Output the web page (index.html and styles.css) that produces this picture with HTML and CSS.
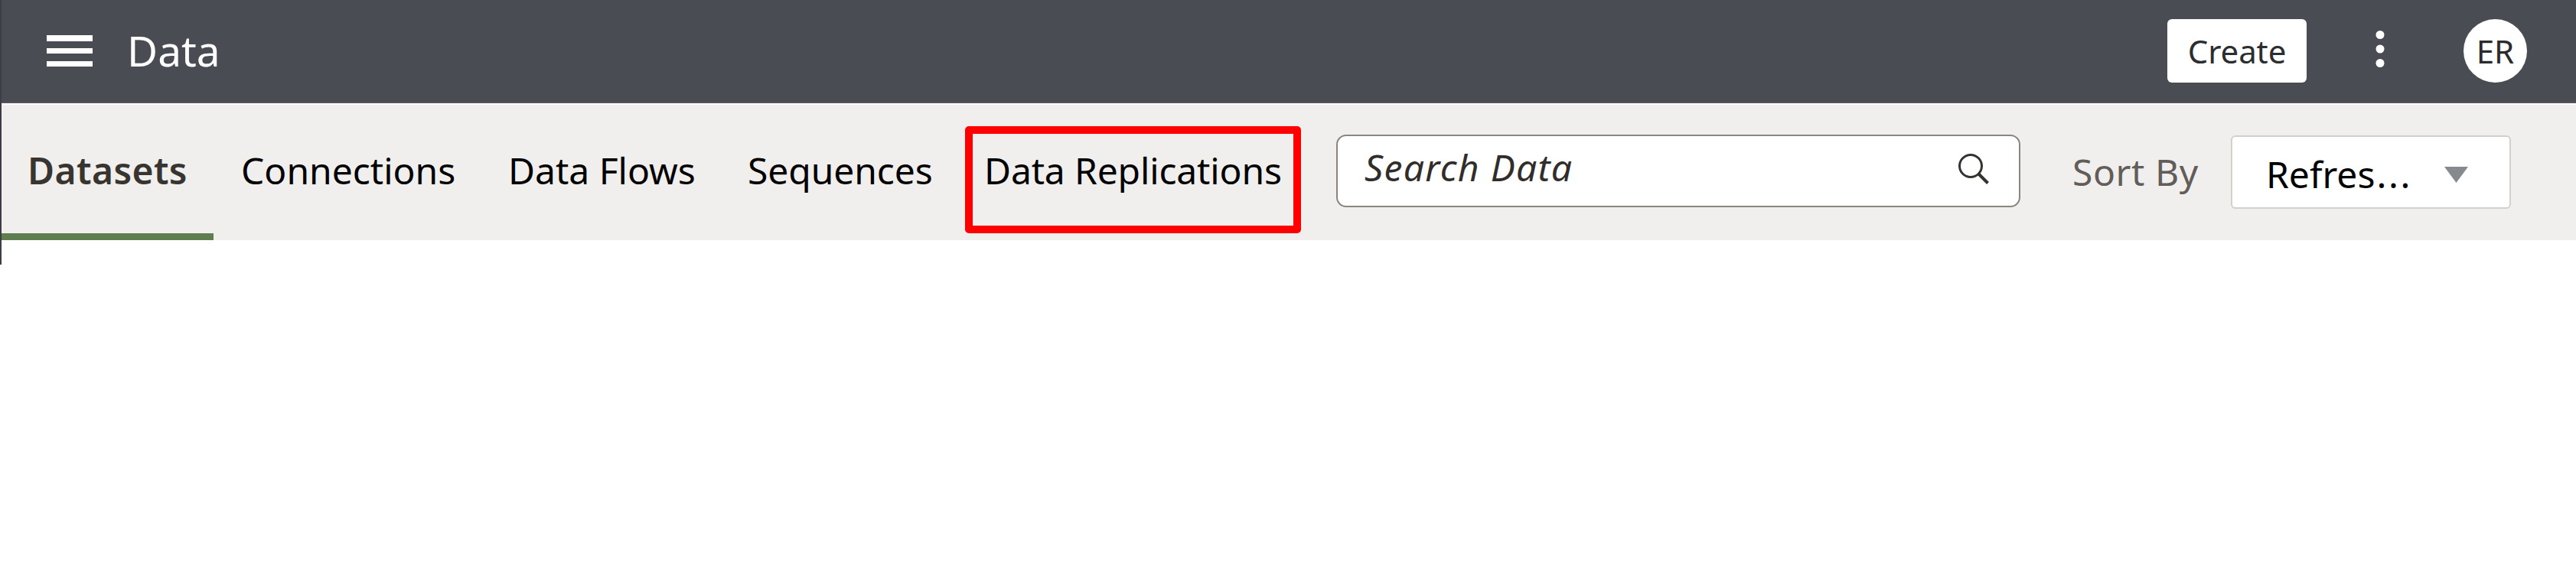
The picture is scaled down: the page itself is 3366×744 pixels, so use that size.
FILE: index.html
```
<!DOCTYPE html>
<html lang="en">
<head>
<meta charset="utf-8">
<title>Data</title>
<link rel="stylesheet" href="styles.css">
</head>
<body>
<div class="app">
  <header class="header">
    <svg class="menu" width="60" height="41" viewBox="0 0 60 41"><path fill="#fff" d="M0 0h60v8H0zM0 17h60v7H0zM0 34h60v7H0z"/></svg>
    <h1 class="title">Data</h1>
    <button class="create">Create</button>
    <svg class="more" width="12" height="50" viewBox="0 0 12 50"><g fill="#fff"><circle cx="6" cy="6.500" r="5.500"/><circle cx="6" cy="25" r="5.500"/><circle cx="6" cy="43.500" r="5.500"/></g></svg>
    <div class="avatar">ER</div>
  </header>
  <nav class="toolbar">
    <div class="tab tab-active"><span class="label">Datasets</span></div>
    <div class="tab tab-connections"><span class="label">Connections</span></div>
    <div class="tab tab-flows"><span class="label">Data Flows</span></div>
    <div class="tab tab-sequences"><span class="label">Sequences</span></div>
    <div class="tab tab-replications"><span class="label">Data Replications</span></div>
    <div class="search">
      <span class="placeholder">Search Data</span>
      <svg class="magnifier" width="42" height="42" viewBox="0 0 42 42" fill="none" stroke="#35322f"><circle cx="17" cy="17" r="14.500" stroke-width="3"/><path d="M27.500 27.500L39.500 39.500" stroke-width="4"/></svg>
    </div>
    <span class="sort-label">Sort By</span>
    <div class="select">
      <span class="value">Refres<span class="dots">...</span></span>
      <svg width="31" height="21" viewBox="0 0 31 21"><path fill="#868a8e" d="M0 0h31L15.500 21z"/></svg>
    </div>
  </nav>
  <div class="edge"></div>
</div>
</body>
</html>
```
FILE: styles.css
```
* { box-sizing: border-box; }
body { margin: 0; background: #fff; font-family: "Noto Sans", sans-serif; }
svg { display: block; flex: none; }
.app { height: 744px; overflow: hidden; position: relative; }
.edge { position: absolute; left: 0; top: 0; width: 2px; height: 346px; background: #3b3e45; }
.header { height: 135px; background: #4a4c54; display: flex; align-items: flex-start; padding-left: 61px; border-bottom: 1px solid #5c5e66; }
.menu { margin-top: 46px; }
.title { margin: 27px 0 0 45px; flex: 1; color: #fff; font-size: 55px; font-weight: 400; line-height: 78px; }
.create { flex: none; width: 182px; height: 83px; margin: 25px 0 0; padding: 0; border: 0; border-radius: 6px; background: #fff; color: #2b2d30; font: 42px/83px "Noto Sans", sans-serif; letter-spacing: -0.1px; }
.more { margin: 39px 103px 0 90px; }
.avatar { flex: none; width: 83px; height: 83px; margin: 25px 64px 0 0; border-radius: 50%; background: #fff; color: #2b2b2b; font-size: 42px; line-height: 83px; text-align: center; }
.toolbar { height: 179px; background: #f1efed; border-top: 2px solid #fcfbfa; display: flex; align-items: flex-start; padding-left: 2px; white-space: nowrap; }
.tab { flex: none; height: 177px; padding-top: 52px; color: #000; font-size: 48px; line-height: 68px; }
.tab-active { width: 277px; padding-left: 34px; border-bottom: 9px solid #5f7d4f; color: #38342f; font-weight: 600; letter-spacing: 0.4px; }
.tab-connections { width: 348px; padding-left: 36px; }
.tab-flows { width: 322px; padding-left: 37px; }
.tab-sequences { width: 312px; padding-left: 28px; letter-spacing: -0.1px; }
.tab-replications { width: 439px; height: 140px; margin-top: 28px; padding: 14px 0 0 15px; border: 10px solid #f00; border-radius: 5px; letter-spacing: -0.15px; }
.search { flex: none; width: 894px; height: 95px; margin: 39px 0 0 46px; border: 2px solid #8b8580; border-radius: 13px; background: #fff; display: flex; justify-content: space-between; padding: 7px 38px 0 35px; }
.placeholder { color: #312d2a; font-size: 48px; font-style: italic; letter-spacing: 1.3px; line-height: 68px; }
.magnifier { margin-top: 15px; }
.sort-label { flex: none; width: 207px; margin: 54px 0 0 68px; color: #625d58; font-size: 48px; letter-spacing: 0.6px; line-height: 68px; }
.select { flex: none; width: 366px; height: 96px; margin-top: 40px; border: 2px solid #d4cfca; border-radius: 6px; background: #fff; display: flex; justify-content: space-between; padding: 15px 54px 0 44px; color: #000; font-size: 48px; line-height: 68px; }
.dots { letter-spacing: 2.7px; margin-left: 2px; }
.select svg { margin-top: 24px; }
```
